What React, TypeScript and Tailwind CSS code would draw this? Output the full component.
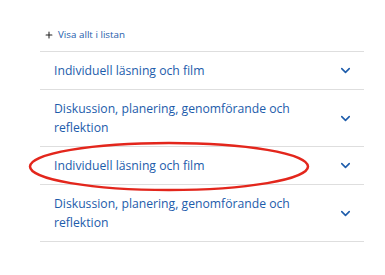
import { ChevronDown, Plus } from "lucide-react";

const items = [
  "Individuell läsning och film",
  "Diskussion, planering, genomförande och reflektion",
  "Individuell läsning och film",
  "Diskussion, planering, genomförande och reflektion",
];

export default function App() {
  return (
    <div className="relative w-[385px] h-[275px] bg-white font-['Open_Sans',sans-serif]">
      <div className="pl-10 pr-[21px] pt-[27px]">
        {/* Show all link */}
        <button className="flex items-center gap-[4px] pl-[4px] pb-[8px] text-[9.8px] leading-[16px] text-[#1d5cab]">
          <Plus className="h-[10px] w-[10px] text-[#222]" strokeWidth={2.5} />
          <span>Visa allt i listan</span>
        </button>

        {/* Accordion list */}
        <ul className="border-t border-[#dedede]">
          {items.map((title, i) => (
            <li key={i} className="border-b border-[#dedede]">
              <button className="flex w-full items-center gap-4 py-[9px] pl-[14px] pr-[11px] text-left">
                <span className="flex-1 text-[12.2px] leading-[19px] text-[#1d5cab]">{title}</span>
                <ChevronDown className="h-[15px] w-[15px] text-[#1d5cab]" strokeWidth={2.5} />
              </button>
            </li>
          ))}
        </ul>
      </div>

      {/* Red annotation circle */}
      <svg className="absolute left-[28px] top-[141px]" width="282" height="51" viewBox="0 0 282 51">
        <ellipse cx="141" cy="25.5" rx="139" ry="23.5" fill="none" stroke="#e3261c" strokeWidth="2.5" />
      </svg>
    </div>
  );
}
